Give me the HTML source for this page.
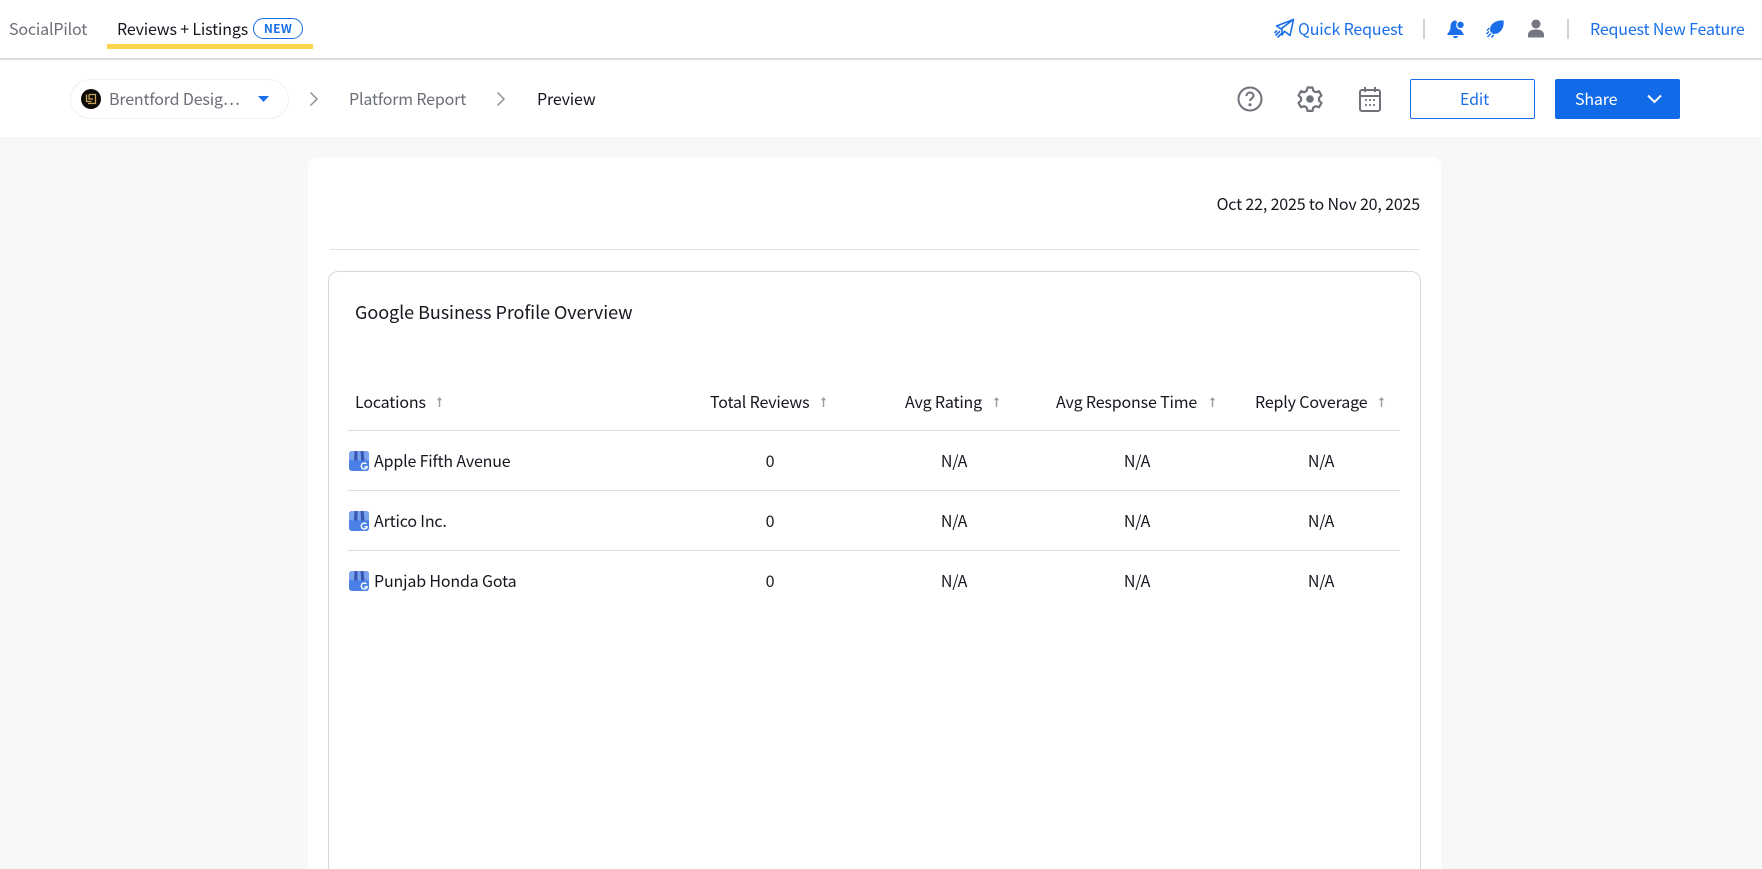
<!DOCTYPE html>
<html><head><meta charset="utf-8"><style>
html,body{margin:0;padding:0;width:1762px;height:869px;overflow:hidden;background:#f7f8fa}
body{font-family:"Noto Sans CJK SC","Liberation Sans",sans-serif;font-size:16px;color:#15181f;position:relative;letter-spacing:-.16px}
.a{position:absolute;white-space:nowrap}
.t{position:absolute;white-space:nowrap;line-height:24px;height:24px}
.c{transform:translateX(-50%)}
.blue{color:#1a6fe8}.gr{color:#6b6e76}
svg{position:absolute;display:block}
</style></head><body>
<svg width="0" height="0"><defs>
<g id="gb"><rect width="20" height="20" rx="3" fill="#4a80e8"/><path d="M0 3a3 3 0 0 1 3-3h14a3 3 0 0 1 3 3v6a3 3 0 0 1-3 0 3 3 0 0 1-3.500 0 3 3 0 0 1-3.500 0 3 3 0 0 1-3.500 0 3 3 0 0 1-3.500 0 3 3 0 0 1-3 0z" fill="#7aa3ee"/><path d="M5.500 0h3v9.200a3 3 0 0 1-3.500 0zM11.500 0h3l1 9.200a3 3 0 0 1-3.500 0z" fill="#3a55b5"/><path d="M17.500 13a3 3 0 1 0 .7 2.800h-2.700" fill="none" stroke="#fff" stroke-width="1.400"/></g>
<path id="up" d="M3.500 0 .8 3.200h2V10h1.400V3.200h2z" fill="#9a9ca2"/>
</defs></svg>

<div class="a" style="left:0;top:0;width:1762px;height:58px;background:#fff;border-bottom:2px solid #dcdcdc"></div>
<div class="t gr" style="left:9px;top:16px">SocialPilot</div>
<div class="t" style="left:117px;top:16px">Reviews + Listings</div>
<div class="a blue" style="left:253px;top:18px;width:48px;height:19px;border:1px solid #1a6fe8;border-radius:11px;font-size:12px;font-weight:700;line-height:19px;text-align:center;letter-spacing:.3px">NEW</div>
<div class="a" style="left:107px;top:44px;width:206px;height:5px;background:#fdd44f"></div>

<svg style="left:1274px;top:18px" width="21" height="21" viewBox="0 0 21 21" fill="none" stroke="#1a6fe8" stroke-width="1.600" stroke-linejoin="round" stroke-linecap="round"><path d="M19.500 1.500 2.500 8l4.500 2.800L19.500 1.500 16 17.500l-5.500-4.300L8 17V10.800"/><path d="M5.500 13.500 2 17M7 16l-3 3M2.500 13l-1.500 1.500"/></svg>
<div class="t blue" style="left:1298px;top:16px">Quick Request</div>
<div class="a" style="left:1423px;top:19px;width:2px;height:20px;background:#d3d3d3"></div>
<svg style="left:1447px;top:20px" width="18" height="19" viewBox="0 0 18 19" fill="#1a6fe8"><path d="M8 .5C4.500 1 3.500 4 3.500 7c0 3-1.500 5-3 6.500V15h16v-1.500c-1.200-1-2-2.200-2.500-3.700C10 9.500 8 6 10 2.200 9.700 1 9 .3 8 .5z"/><circle cx="13.500" cy="4.800" r="3.200"/><path d="M6 16h5a2.500 2.200 0 0 1-5 0z"/></svg>
<svg style="left:1486px;top:20px" width="18" height="18" viewBox="0 0 18 18" fill="#1a6fe8"><path d="M17.500.5C12 0 7 2 4.500 6.500L4 11l3 3 4.500-.5C16 11 18.500 6 17.500.5z"/><path d="M3.500 8 1 10.500M3 11.500 .5 14M5 13.500 1.500 17M7.500 15 5.500 17.500" stroke="#1a6fe8" stroke-width="1.500" fill="none"/></svg>
<svg style="left:1528px;top:19px" width="16" height="19" viewBox="0 0 16 19" fill="#74777f"><circle cx="8" cy="5" r="4.500"/><path d="M0 18.500v-3c0-3 3-5 8-5s8 2 8 5v3z"/></svg>
<div class="a" style="left:1567px;top:19px;width:2px;height:20px;background:#d3d3d3"></div>
<div class="t blue" style="left:1590px;top:16px">Request New Feature</div>

<div class="a" style="left:0;top:60px;width:1762px;height:78px;background:#fff;border-bottom:1px solid #efefef"></div>
<div class="a" style="left:70px;top:79px;width:217px;height:38px;border:1px solid #f0f0f0;border-radius:20px"></div>
<svg style="left:81px;top:89px" width="20" height="20" viewBox="0 0 20 20"><circle cx="10" cy="10" r="10" fill="#0c0a06"/><path d="M5.500 5.500v7h5M8 5.500v4.500h4M8 5.500h6.500v9H7" fill="none" stroke="#c9a35a" stroke-width="1.300"/></svg>
<div class="t gr" style="left:109px;top:86px">Brentford Desig…</div>
<svg style="left:258px;top:96px" width="11" height="6" viewBox="0 0 11 6"><path d="M0 0h11L5.500 6z" fill="#1a6fe8"/></svg>
<svg style="left:309px;top:91px" width="10" height="16" viewBox="0 0 10 16"><path d="M1.500 1.500 8 8l-6.500 6.500" fill="none" stroke="#8f9196" stroke-width="1.500"/></svg>
<div class="t gr" style="left:349px;top:86px">Platform Report</div>
<svg style="left:496px;top:91px" width="10" height="16" viewBox="0 0 10 16"><path d="M1.500 1.500 8 8l-6.500 6.500" fill="none" stroke="#8f9196" stroke-width="1.500"/></svg>
<div class="t" style="left:537px;top:86px">Preview</div>

<svg style="left:1237px;top:86px" width="26" height="26" viewBox="0 0 26 26" fill="none" stroke="#6f7279" stroke-width="2"><circle cx="13" cy="13" r="11.500"/><path d="M9.500 10c0-2.200 1.600-3.500 3.500-3.500s3.500 1.300 3.500 3.200c0 2.600-3.500 2.800-3.500 5.300"/><circle cx="13" cy="18.800" r=".6" fill="#6f7279"/></svg>
<svg style="left:1297px;top:86px" width="26" height="26" viewBox="0 0 26 26" fill="none" stroke="#6f7279" stroke-width="2.200" stroke-linejoin="round"><path d="M10.500 1.500h5l.8 3.300 2.400 1.400 3.300-1 2.500 4.300-2.500 2.300v2.800l2.500 2.300-2.500 4.300-3.300-1-2.400 1.400-.8 3.300h-5l-.8-3.300-2.400-1.400-3.300 1-2.500-4.300 2.500-2.300v-2.800L1.500 9.500 4 5.200l3.300 1 2.400-1.400z"/><circle cx="13" cy="13" r="3.800" fill="#6f7279" stroke="none"/></svg>
<svg style="left:1359px;top:86px" width="22" height="26" viewBox="0 0 22 26" fill="none" stroke="#6f7279" stroke-width="2"><rect x="1" y="4" width="20" height="21" rx="2"/><path d="M1 10h20M6 1v5M16 1v5"/><path d="M6 14h2M10 14h2M14 14h2M6 19h2M10 19h2M14 19h2" stroke-width="1.800"/></svg>

<div class="a blue" style="left:1410px;top:79px;width:123px;height:38px;border:1px solid #1a6fe8;border-radius:2px;text-align:center;line-height:36px;text-indent:4px">Edit</div>
<div class="a" style="left:1555px;top:79px;width:125px;height:40px;background:#116ae8;border-radius:2px"></div>
<div class="t" style="left:1575px;top:86px;color:#fff">Share</div>
<svg style="left:1647px;top:94px" width="15" height="10" viewBox="0 0 15 10"><path d="M1 1.500 7.500 8 14 1.500" fill="none" stroke="#fff" stroke-width="2"/></svg>

<div class="a" style="left:308px;top:158px;width:1133px;height:720px;background:#fff;border-radius:8px"></div>
<div class="t" style="right:342px;top:191px">Oct 22, 2025 to Nov 20, 2025</div>
<div class="a" style="left:330px;top:249px;width:1090px;height:1px;background:#e2e2e2"></div>
<div class="a" style="left:328px;top:271px;width:1091px;height:620px;border:1px solid #d8d8d8;border-radius:10px"></div>
<div class="t" style="left:355px;top:300px;font-size:18px;letter-spacing:-.06px">Google Business Profile Overview</div>

<div class="t" style="left:355px;top:389px">Locations</div><svg style="left:436px;top:397px" width="7" height="11"><use href="#up"/></svg>
<div class="t" style="left:710px;top:389px">Total Reviews</div><svg style="left:820px;top:397px" width="7" height="11"><use href="#up"/></svg>
<div class="t" style="left:905px;top:389px">Avg Rating</div><svg style="left:993px;top:397px" width="7" height="11"><use href="#up"/></svg>
<div class="t" style="left:1056px;top:389px">Avg Response Time</div><svg style="left:1209px;top:397px" width="7" height="11"><use href="#up"/></svg>
<div class="t" style="left:1255px;top:389px">Reply Coverage</div><svg style="left:1378px;top:397px" width="7" height="11"><use href="#up"/></svg>
<div class="a" style="left:348px;top:430px;width:1052px;height:1px;background:#dcdcdc"></div>

<svg style="left:349px;top:451px" width="20" height="20"><use href="#gb"/></svg>
<div class="t" style="left:374px;top:448px">Apple Fifth Avenue</div>
<div class="t c" style="left:770px;top:448px">0</div><div class="t c" style="left:954px;top:448px">N/A</div><div class="t c" style="left:1137px;top:448px">N/A</div><div class="t c" style="left:1321px;top:448px">N/A</div>
<div class="a" style="left:348px;top:490px;width:1052px;height:1px;background:#dcdcdc"></div>

<svg style="left:349px;top:511px" width="20" height="20"><use href="#gb"/></svg>
<div class="t" style="left:374px;top:508px">Artico Inc.</div>
<div class="t c" style="left:770px;top:508px">0</div><div class="t c" style="left:954px;top:508px">N/A</div><div class="t c" style="left:1137px;top:508px">N/A</div><div class="t c" style="left:1321px;top:508px">N/A</div>
<div class="a" style="left:348px;top:550px;width:1052px;height:1px;background:#dcdcdc"></div>

<svg style="left:349px;top:571px" width="20" height="20"><use href="#gb"/></svg>
<div class="t" style="left:374px;top:568px">Punjab Honda Gota</div>
<div class="t c" style="left:770px;top:568px">0</div><div class="t c" style="left:954px;top:568px">N/A</div><div class="t c" style="left:1137px;top:568px">N/A</div><div class="t c" style="left:1321px;top:568px">N/A</div>
</body></html>
